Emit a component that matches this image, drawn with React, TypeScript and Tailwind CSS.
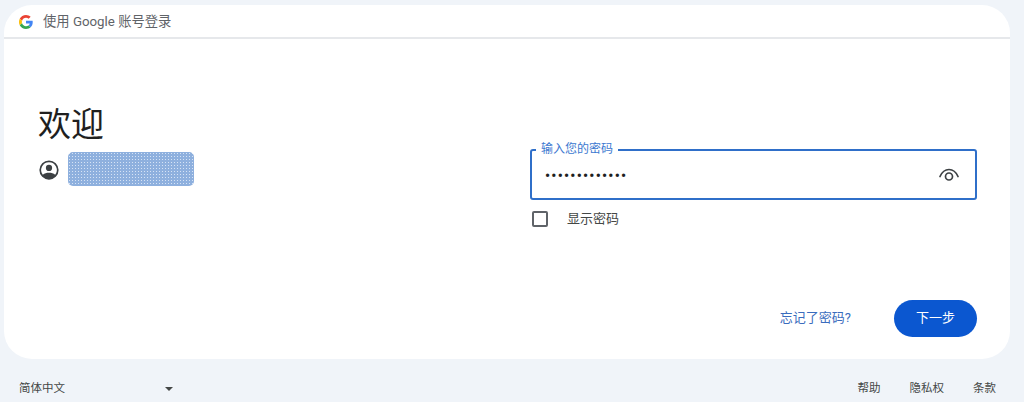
const cjk = "font-['Roboto','Noto_Sans_CJK_SC',sans-serif]"

function GoogleLogo() {
  return (
    <svg width="14" height="14" viewBox="0 0 48 48">
      <path fill="#EA4335" d="M24 9.5c3.5 0 6.6 1.2 9.1 3.6l6.8-6.8C35.8 2.4 30.400 0 24 0 14.600 0 6.600 5.400 2.600 13.200l7.900 6.200C12.400 13.600 17.700 9.500 24 9.500z" />
      <path fill="#4285F4" d="M47 24.500c0-1.600-.1-3.100-.4-4.500H24v9h12.900c-.6 3-2.200 5.500-4.700 7.200l7.600 5.900C44.300 37.900 47 31.800 47 24.500z" />
      <path fill="#FBBC05" d="M10.500 28.600c-.5-1.500-.8-3-.8-4.600s.3-3.100.8-4.600l-7.900-6.200C.9 16.500 0 20.100 0 24s.9 7.500 2.600 10.800l7.900-6.200z" />
      <path fill="#34A853" d="M24 48c6.500 0 11.900-2.100 15.800-5.900l-7.600-5.900c-2.100 1.400-4.900 2.300-8.200 2.300-6.300 0-11.600-4.200-13.500-9.900l-7.900 6.200C6.600 42.600 14.600 48 24 48z" />
    </svg>
  )
}

function AccountIcon() {
  return (
    <svg width="22" height="22" viewBox="0 0 24 24" fill="#3c4043" className="mt-[2px]">
      <path d="M12 1.500a10.500 10.500 0 1 0 0 21 10.500 10.500 0 0 0 0-21zm0 2a8.500 8.500 0 0 1 6.700 13.700C17 15.600 14.600 15 12 15s-5 .6-6.700 2.200A8.500 8.500 0 0 1 12 3.500z" />
      <circle cx="12" cy="9.800" r="3.400" />
    </svg>
  )
}

// arc over a ring, no lower lid
function EyeIcon() {
  return (
    <svg width="20" height="16" viewBox="0 0 20 16" fill="none" stroke="#3c4043" strokeWidth="1.7">
      <path d="M1 9.500C3 5 6.300 2.500 10 2.500s7 2.500 9 7" strokeLinecap="round" />
      <circle cx="10" cy="9.500" r="3.500" />
    </svg>
  )
}

export default function App() {
  return (
    <div className={`flex h-[402px] w-[1024px] flex-col overflow-hidden bg-[#f0f4f9] ${cjk}`}>
      <div className="ml-1 mt-[5px] flex h-[354px] w-[1006px] flex-col rounded-[28px] bg-white">
        {/* header */}
        <div className="flex h-[34px] items-center gap-[10px] border-b-2 border-[#e6e8eb] pl-[15px] pt-[2px]">
          <GoogleLogo />
          <span className="text-[13.3px] text-[#5f6368]">使用 Google 账号登录</span>
        </div>

        <div className="flex flex-1">
          {/* left column */}
          <div className="w-[526px] pl-[34px] pt-[62px]">
            <h1 className="text-[33px] leading-[48px] font-normal text-[#1f1f1f]">欢迎</h1>
            <div className="mt-[3px] flex items-center gap-[8px]">
              <AccountIcon />
              <div className="h-[34px] w-[126px] rounded-[5px] bg-[#8eb0de] bg-[radial-gradient(circle,#d6e3f5_1px,transparent_1px)] bg-[length:3px_3px]" />
            </div>
          </div>

          {/* right column */}
          <div className="w-[447px] pt-[110px]">
            <div className="relative flex h-[51px] items-center justify-between rounded-[3px] border-2 border-[#2f6fc9] pl-[13px] pr-[16px]">
              <span className="absolute -top-[9px] left-[4px] bg-white px-[5px] text-[12px] leading-[15px] text-[#3b78d0]">
                输入您的密码
              </span>
              <span className="pt-[4px] text-[14px] font-bold tracking-[1.3px] text-[#1f1f1f]">•••••••••••••</span>
              <EyeIcon />
            </div>
            <div className="mt-[9px] flex items-center gap-[19px] pl-[2px]">
              <div className="h-[16px] w-[16px] rounded-[2px] border-2 border-[#5f6368]" />
              <span className="text-[13px] text-[#444746]">显示密码</span>
            </div>
            <div className="mt-[71px] flex items-center justify-end gap-[43px]">
              <span className="text-[13px] text-[#3a6cbd]">忘记了密码?</span>
              <div className="flex h-[37px] w-[83px] items-center justify-center rounded-full bg-[#0b57d0] text-[13px] text-white">
                下一步
              </div>
            </div>
          </div>
        </div>
      </div>

      {/* footer */}
      <div className="flex flex-1 items-center pl-[19px] pr-[28px] pt-[16px] text-[#444746]">
        <span className="text-[11.5px]">简体中文</span>
        <div className="ml-[100px] h-0 w-0 border-x-[4px] border-t-[4px] border-x-transparent border-t-[#444746]" />
        <div className="ml-auto flex gap-[29px] text-[11.5px]">
          <span>帮助</span>
          <span>隐私权</span>
          <span>条款</span>
        </div>
      </div>
    </div>
  )
}
